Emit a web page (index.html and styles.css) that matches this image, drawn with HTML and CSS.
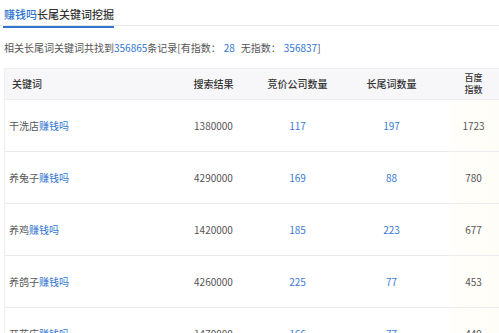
FILE: index.html
```html
<!DOCTYPE html>
<html lang="zh">
<head>
<meta charset="utf-8">
<link rel="stylesheet" href="styles.css">
</head>
<body>
<div class="page">
  <div class="tabs">
    <div class="tab active"><span class="blue">赚钱吗</span>长尾关键词挖掘</div>
  </div>
  <p class="summary">相关长尾词关键词共找到<span class="blue">356865</span>条记录[有指数：<span class="gap"></span><span class="blue">28</span><span class="gap2"></span>无指数：<span class="gap"></span><span class="blue">356837</span>]</p>
  <table class="grid">
    <colgroup>
      <col class="c1"><col class="c2"><col class="c3"><col class="c4"><col class="c5">
    </colgroup>
    <thead>
      <tr>
        <th class="left">关键词</th>
        <th>搜索结果</th>
        <th>竞价公司数量</th>
        <th>长尾词数量</th>
        <th class="two"><span class="ln">百度</span><span class="ln">指数</span></th>
      </tr>
    </thead>
    <tbody>
      <tr><td class="left">干洗店<span class="blue">赚钱吗</span></td><td>1380000</td><td class="blue">117</td><td class="blue">197</td><td class="idx">1723</td></tr>
      <tr><td class="left">养兔子<span class="blue">赚钱吗</span></td><td>4290000</td><td class="blue">169</td><td class="blue">88</td><td class="idx">780</td></tr>
      <tr><td class="left">养鸡<span class="blue">赚钱吗</span></td><td>1420000</td><td class="blue">185</td><td class="blue">223</td><td class="idx">677</td></tr>
      <tr><td class="left">养鸽子<span class="blue">赚钱吗</span></td><td>4260000</td><td class="blue">225</td><td class="blue">77</td><td class="idx">453</td></tr>
      <tr><td class="left">开花店<span class="blue">赚钱吗</span></td><td>1470000</td><td class="blue">166</td><td class="blue">77</td><td class="idx">449</td></tr>
    </tbody>
  </table>
</div>
</body>
</html>
```
FILE: styles.css
```css
html, body {
  margin: 0;
  padding: 0;
  background: #fff;
  overflow: hidden;
}
body {
  font-family: "Noto Sans CJK SC", "Noto Sans", sans-serif;
  color: #555;
}
.page {
  width: 499px;
  height: 333px;
  overflow: hidden;
}
.blue { color: #2f74d0; }
.tabs {
  border-bottom: 1px solid #e6e8ec;
  height: 26px;
  box-sizing: border-box;
  padding-left: 3px;
}
.tab {
  display: inline-block;
  height: 25px;
  box-sizing: border-box;
  padding: 4px 1px 0;
  font-size: 11px;
  line-height: 14px;
  font-weight: 500;
  color: #333;
  border-bottom: 2px solid #2f74d0;
  width: 111px;
  white-space: nowrap;
}
.summary {
  margin: 0;
  padding: 15px 0 0 4px;
  font-size: 10px;
  line-height: 14px;
  color: #555;
  white-space: nowrap;
}
.gap { display: inline-block; width: 3px; }
.gap2 { display: inline-block; width: 6px; }
.grid {
  margin: 13px 0 0 4px;
  border-collapse: collapse;
  table-layout: fixed;
  width: 500px;
  font-size: 10px;
  border-left: 1px solid #eeeef1;
}
.c1 { width: 161px; }
.c2 { width: 96px; }
.c3 { width: 72px; }
.c4 { width: 116px; }
.c5 { width: 55px; }
.grid th {
  height: 30px;
  padding: 0;
  background: #f7f7f9;
  font-weight: 500;
  color: #333;
  text-align: center;
  line-height: 12px;
  border-top: 1px solid #f0f0f3;
  border-bottom: 1px solid #eeeef1;
}
.grid th.left { text-align: left; padding-left: 7px; }
.grid th.two { font-size: 9px; line-height: 12px; padding-right: 7px; }
.ln { display: block; }
.grid td {
  height: 51px;
  padding: 0;
  text-align: center;
  border-bottom: 1px solid #ebebee;
  color: #555;
}
.grid td.blue { color: #3a7ad6; }
.grid td.left { text-align: left; padding-left: 4px; }
.grid td.idx {
  padding-right: 7px;
  background: linear-gradient(90deg, #fffefb, #fffdf6);
}
```
